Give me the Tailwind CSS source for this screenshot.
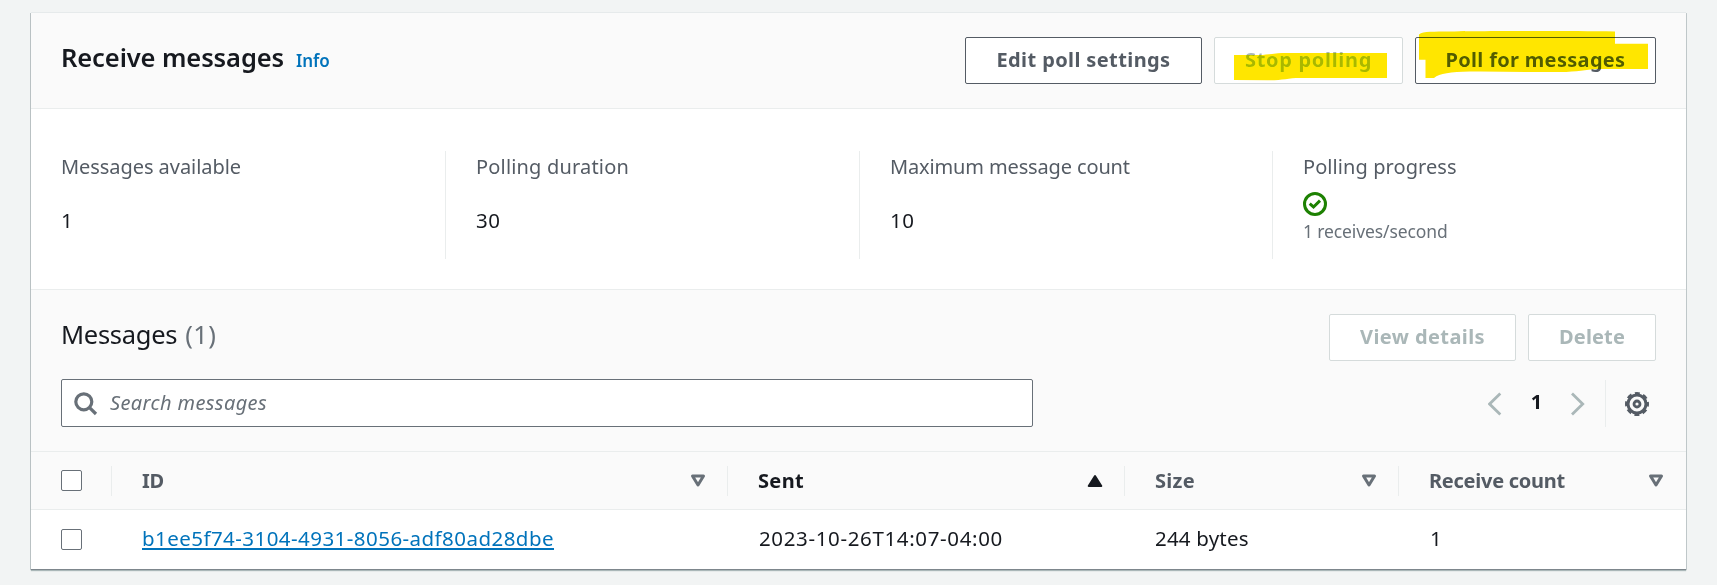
<!DOCTYPE html>
<html lang="en">
<head>
<meta charset="utf-8">
<title>Receive messages</title>
<script src="https://cdn.jsdelivr.net/npm/@tailwindcss/browser@4"></script>
</head>
<body class="h-[585px] overflow-hidden bg-[#f2f4f4] px-[31px] pt-[12px] font-['Noto_Sans','Open_Sans',sans-serif] text-[20px] leading-[30px] text-[#16191f]">
<main class="relative h-[557px] w-[1655px] whitespace-nowrap border-t border-[#e6eaeb] bg-white shadow-[0_1px_0_0_#7d868c,0_2px_1px_0_#aab7b8,1px_1px_0_0_#c3cbcd,-1px_1px_0_0_#bcc3c6]">

  <header class="flex h-[96px] justify-between border-b border-[#eaeded] bg-[#fafafa] pl-[30px] pr-[30px] pt-[24px]">
    <div class="flex items-baseline gap-[12px] pt-[5px]">
      <h1 class="text-[25.5px] font-semibold leading-[30px] tracking-[-0.1px]">Receive messages</h1>
      <a class="text-[17px] font-semibold leading-[24px] tracking-[-0.1px] text-[#0073bb]">Info</a>
    </div>
    <div class="flex gap-[12px] font-bold text-[#545b64]">
      <button class="flex h-[47px] w-[237px] justify-center rounded-[2px] border border-[#545b64] bg-white pt-[7px] tracking-[0.39px]">Edit poll settings</button>
      <button class="flex h-[47px] w-[189px] justify-center rounded-[2px] border border-[#d5dbdb] bg-white pt-[7px] tracking-[0.69px] text-[#aab7b8]">Stop polling</button>
      <button class="flex h-[47px] w-[241px] justify-center rounded-[2px] border border-[#545b64] bg-white pt-[7px] tracking-[0.32px]">Poll for messages</button>
    </div>
    <!-- Highlighter strokes over the polling buttons -->
    <svg class="pointer-events-none absolute left-[1203px] top-[17px] mix-blend-darken" width="420" height="52" viewBox="1234 30 420 52" fill="#ffe600">
      <path d="M1234 55L1259 55C1270 54.500 1276 53 1287 53H1387V78H1300C1288 78 1282 80.500 1268 80.300L1234 80Z"/>
      <path d="M1419 34.500C1421 32.500 1425 32 1430 31.800C1470 31 1560 30.700 1615 31.500V43.700H1648V69H1597C1585 69.500 1578 72 1560 72C1530 72.500 1500 71.300 1470 71.600C1450 72 1440 73.500 1434 78H1425.500V59.700H1419Z"/>
    </svg>
  </header>

  <section class="flex h-[181px] border-b border-[#eaeded] pt-[42px]">
    <div class="h-[108px] w-[414px] pl-[30px]">
      <div class="h-[54px] pt-px tracking-[-0.06px] text-[#545b64]">Messages available</div>
      <div class="text-[20.5px]">1</div>
    </div>
    <div class="h-[108px] w-[414px] border-l border-[#eaeded] pl-[30px]">
      <div class="h-[54px] pt-px tracking-[0.18px] text-[#545b64]">Polling duration</div>
      <div class="text-[20.5px] tracking-[0.6px]">30</div>
    </div>
    <div class="h-[108px] w-[413px] border-l border-[#eaeded] pl-[30px]">
      <div class="h-[54px] pt-px tracking-[-0.14px] text-[#545b64]">Maximum message count</div>
      <div class="text-[20.5px] tracking-[0.6px]">10</div>
    </div>
    <div class="h-[108px] border-l border-[#eaeded] pl-[30px]">
      <div class="h-[41px] pt-px tracking-[0.08px] text-[#545b64]">Polling progress</div>
      <svg class="block" width="24" height="24" viewBox="0 0 24 24" fill="none" stroke="#1d8102" stroke-width="3">
        <circle cx="12" cy="12" r="10.500"/>
        <path d="M6.700 11.700L10.500 15L17 8.700"/>
      </svg>
      <div class="pt-[3px] text-[17.5px] leading-[24px] tracking-[-0.12px] text-[#687078]">1 receives/second</div>
    </div>
  </section>

  <section class="h-[162px] border-b border-[#eaeded] bg-[#fafafa] pl-[30px] pr-[30px] pt-[24px]">
    <div class="flex h-[65px] justify-between">
      <h2 class="flex gap-[8px] pt-[5px] text-[25.5px] leading-[30px]"><span class="tracking-[-0.3px]">Messages</span><span class="tracking-[0.5px] text-[#687078]">(1)</span></h2>
      <div class="flex gap-[12px] font-bold text-[#aab7b8]">
        <button class="flex h-[47px] w-[187px] justify-center rounded-[2px] border border-[#d5dbdb] bg-white pt-[7px] tracking-[0.41px]">View details</button>
        <button class="flex h-[47px] w-[128px] justify-center rounded-[2px] border border-[#d5dbdb] bg-white pt-[7px] tracking-[0.15px]">Delete</button>
      </div>
    </div>
    <div class="flex justify-between">
      <div class="flex h-[48px] w-[972px] rounded-[2px] border border-[#687078] bg-white pl-[12px] pt-[8px]">
        <svg class="mt-[4px]" width="24" height="24" viewBox="0 0 24 24" fill="none" stroke="#687078" stroke-width="3.200">
          <circle cx="9.800" cy="9.800" r="8"/>
          <path d="M15.300 15.300L22 22"/>
        </svg>
        <span class="pl-[12px] italic tracking-[0.39px] text-[#687078]">Search messages</span>
      </div>
      <div class="flex h-[47px] items-start">
        <svg class="mt-[13px]" width="14" height="24" viewBox="0 0 14 24" fill="none" stroke="#aab7b8" stroke-width="2.800"><path d="M12.300 1.500L1.600 12L12.300 22.500"/></svg>
        <span class="w-[69px] pt-[8px] text-center font-bold">1</span>
        <svg class="mt-[13px]" width="14" height="24" viewBox="0 0 14 24" fill="none" stroke="#aab7b8" stroke-width="2.800"><path d="M1 1.500L11.700 12L1 22.500"/></svg>
        <div class="ml-[20px] mt-[1px] h-[47px] border-l border-[#eaeded]"></div>
        <!-- Gear: rim, eight teeth, hub -->
        <svg class="ml-[19px] mr-[7px] mt-[13px]" width="24" height="24" viewBox="0 0 24 24" fill="none" stroke="#545b64">
          <circle cx="12" cy="12" r="9" stroke-width="3"/>
          <circle cx="12" cy="12" r="10.800" stroke-width="2.400" stroke-dasharray="5 3.482" stroke-dashoffset="2.500"/>
          <circle cx="12" cy="12" r="3" stroke-width="2.800"/>
        </svg>
      </div>
    </div>
  </section>

  <!-- Messages table -->
  <div class="grid h-[58px] grid-cols-[80px_616px_397px_274px_288px] border-b border-[#eaeded] bg-[#fafafa] pt-[14px] font-bold text-[#545b64]">
    <div class="pl-[30px] pt-[4px]"><div class="size-[21px] rounded-[2px] border border-[#687078] bg-white"></div></div>
    <div class="flex h-[30px] justify-between border-l border-[#eaeded] pl-[30px] pr-[21px]">
      <span class="tracking-[-0.2px]">ID</span>
      <svg class="mt-[8px]" width="16" height="14" viewBox="0 0 16 14" fill="none" stroke="#687078" stroke-width="3" stroke-linejoin="round"><path d="M2.500 2H13.500L8 11Z"/></svg>
    </div>
    <div class="flex h-[30px] justify-between border-l border-[#eaeded] pl-[30px] pr-[21px] text-[#16191f]">
      <span class="tracking-[0.34px]">Sent</span>
      <svg class="mt-[8px]" width="16" height="14" viewBox="0 0 16 14" fill="#16191f" stroke="#16191f" stroke-width="2" stroke-linejoin="round"><path d="M1.700 12H14.300L8 2Z"/></svg>
    </div>
    <div class="flex h-[30px] justify-between border-l border-[#eaeded] pl-[30px] pr-[21px]">
      <span class="tracking-[0.3px]">Size</span>
      <svg class="mt-[8px]" width="16" height="14" viewBox="0 0 16 14" fill="none" stroke="#687078" stroke-width="3" stroke-linejoin="round"><path d="M2.500 2H13.500L8 11Z"/></svg>
    </div>
    <div class="flex h-[30px] justify-between border-l border-[#eaeded] pl-[30px] pr-[22px]">
      <span class="tracking-[-0.26px]">Receive count</span>
      <svg class="mt-[8px]" width="16" height="14" viewBox="0 0 16 14" fill="none" stroke="#687078" stroke-width="3" stroke-linejoin="round"><path d="M2.500 2H13.500L8 11Z"/></svg>
    </div>
  </div>
  <div class="grid h-[58px] grid-cols-[80px_616px_397px_274px_288px] pt-[13px] text-[20.5px]">
    <div class="pl-[30px] pt-[6px]"><div class="size-[21px] rounded-[2px] border border-[#687078] bg-white"></div></div>
    <div class="pl-[31px]"><a class="inline-block h-[27px] border-b-2 border-[#0073bb] tracking-[0.45px] text-[#0073bb]">b1ee5f74-3104-4931-8056-adf80ad28dbe</a></div>
    <div class="pl-[32px] tracking-[0.64px]">2023-10-26T14:07-04:00</div>
    <div class="pl-[31px] tracking-[0.2px]">244 bytes</div>
    <div class="pl-[32px]">1</div>
  </div>
</main>
</body>
</html>
